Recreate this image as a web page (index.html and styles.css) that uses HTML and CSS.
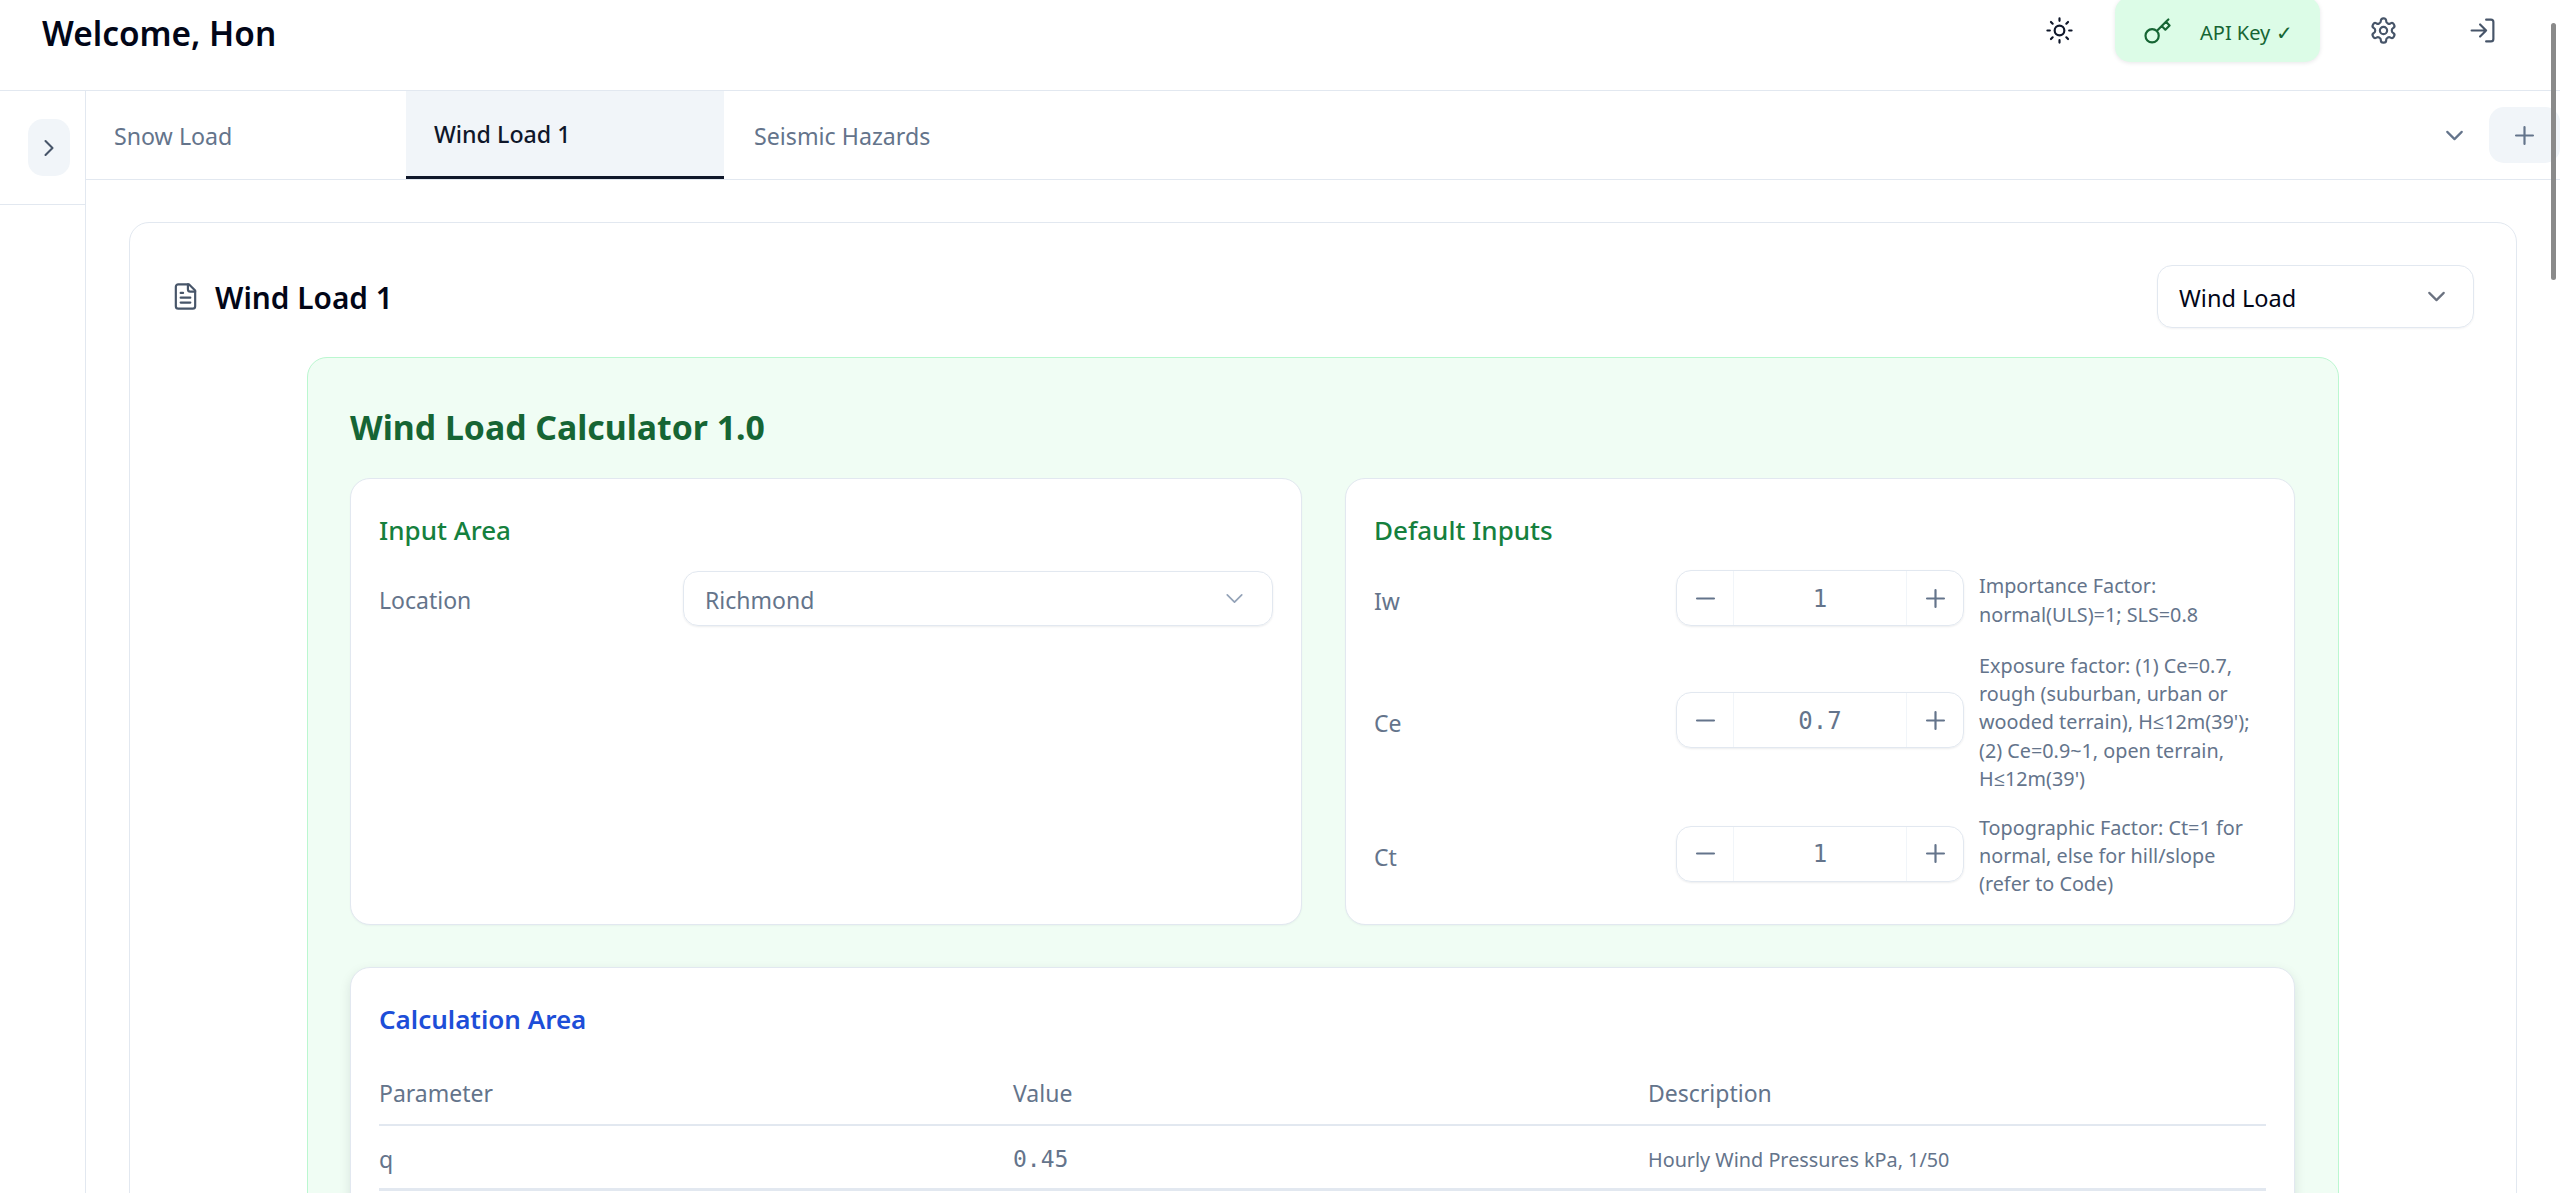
FILE: index.html
```html
<!DOCTYPE html>
<html lang="en">
<head>
<meta charset="utf-8">
<title>Wind Load 1</title>
<link rel="stylesheet" href="styles.css">
</head>
<body>
<div class="app">
  <header class="topbar">
    <h1 class="welcome">Welcome, Hon</h1>
    <div class="top-actions">
      <button class="top-icon sun"><svg class="ico" viewBox="0 0 24 24"><circle cx="12" cy="12" r="4"/><path d="M12 2v2M12 20v2M4.93 4.93l1.41 1.41M17.66 17.66l1.41 1.41M2 12h2M20 12h2M6.34 17.66l-1.41 1.41M19.07 4.93l-1.41 1.41"/></svg></button>
      <button class="api-key"><svg class="ico" viewBox="0 0 24 24"><path d="m21 2-2 2m-7.61 7.61a5.5 5.5 0 1 1-7.778 7.778 5.5 5.5 0 0 1 7.777-7.777zm0 0L15.5 7.5m0 0 3 3L22 7l-3-3m-3.5 3.5L19 4"/></svg><span>API Key ✓</span></button>
      <button class="top-icon gear"><svg class="ico" viewBox="0 0 24 24"><path d="M12.22 2h-.44a2 2 0 0 0-2 2v.18a2 2 0 0 1-1 1.73l-.43.25a2 2 0 0 1-2 0l-.15-.08a2 2 0 0 0-2.73.73l-.22.38a2 2 0 0 0 .73 2.73l.15.1a2 2 0 0 1 1 1.72v.51a2 2 0 0 1-1 1.74l-.15.09a2 2 0 0 0-.73 2.73l.22.38a2 2 0 0 0 2.73.73l.15-.08a2 2 0 0 1 2 0l.43.25a2 2 0 0 1 1 1.73V20a2 2 0 0 0 2 2h.44a2 2 0 0 0 2-2v-.18a2 2 0 0 1 1-1.73l.43-.25a2 2 0 0 1 2 0l.15.08a2 2 0 0 0 2.73-.73l.22-.39a2 2 0 0 0-.73-2.73l-.15-.08a2 2 0 0 1-1-1.74v-.5a2 2 0 0 1 1-1.74l.15-.09a2 2 0 0 0 .73-2.73l-.22-.38a2 2 0 0 0-2.73-.73l-.15.08a2 2 0 0 1-2 0l-.43-.25a2 2 0 0 1-1-1.73V4a2 2 0 0 0-2-2z"/><circle cx="12" cy="12" r="3"/></svg></button>
      <button class="top-icon exit"><svg class="ico" viewBox="0 0 24 24"><path d="M15 3h4a2 2 0 0 1 2 2v14a2 2 0 0 1-2 2h-4M10 17l5-5-5-5M15 12H3"/></svg></button>
    </div>
  </header>
  <div class="workspace">
    <aside class="sidebar">
      <div class="side-head">
        <button class="side-toggle"><svg class="ico" viewBox="0 0 24 24"><path d="m9 18 6-6-6-6"/></svg></button>
      </div>
    </aside>
    <main class="main">
      <nav class="tabbar">
        <a class="tab">Snow Load</a>
        <a class="tab active">Wind Load 1</a>
        <a class="tab">Seismic Hazards</a>
        <span class="tab-spacer"></span>
        <button class="tab-menu"><svg class="ico" viewBox="0 0 24 24"><path d="m6 9 6 6 6-6"/></svg></button>
        <button class="tab-add"><svg class="ico" viewBox="0 0 24 24"><path d="M5 12h14M12 5v14"/></svg></button>
      </nav>
      <div class="content">
        <section class="sheet">
          <div class="sheet-head">
            <div class="sheet-title">
              <svg class="ico doc" viewBox="0 0 24 24"><path d="M15 2H6a2 2 0 0 0-2 2v16a2 2 0 0 0 2 2h12a2 2 0 0 0 2-2V7Z"/><path d="M14 2v4a2 2 0 0 0 2 2h4M10 9H8M16 13H8M16 17H8"/></svg>
              <h2>Wind Load 1</h2>
            </div>
            <div class="type-select"><span>Wind Load</span><svg class="ico" viewBox="0 0 24 24"><path d="m6 9 6 6 6-6"/></svg></div>
          </div>
          <div class="panel">
            <h3 class="panel-title">Wind Load Calculator 1.0</h3>
            <div class="two-col">
              <div class="box">
                <h4 class="box-title green">Input Area</h4>
                <div class="input-row">
                  <span class="field-label">Location</span>
                  <div class="loc-select"><span>Richmond</span><svg class="ico" viewBox="0 0 24 24"><path d="m6 9 6 6 6-6"/></svg></div>
                </div>
              </div>
              <div class="box">
                <h4 class="box-title green">Default Inputs</h4>
                <div class="defaults">
                  <div class="def-row">
                    <span class="field-label">Iw</span>
                    <div class="stepper"><button class="step"><svg class="ico" viewBox="0 0 24 24"><path d="M5 12h14"/></svg></button><span class="step-val">1</span><button class="step"><svg class="ico" viewBox="0 0 24 24"><path d="M5 12h14M12 5v14"/></svg></button></div>
                    <p class="hint">Importance Factor: normal(ULS)=1; SLS=0.8</p>
                  </div>
                  <div class="def-row">
                    <span class="field-label">Ce</span>
                    <div class="stepper"><button class="step"><svg class="ico" viewBox="0 0 24 24"><path d="M5 12h14"/></svg></button><span class="step-val">0.7</span><button class="step"><svg class="ico" viewBox="0 0 24 24"><path d="M5 12h14M12 5v14"/></svg></button></div>
                    <p class="hint">Exposure factor: (1) Ce=0.7, rough (suburban, urban or wooded terrain), H≤12m(39'); (2) Ce=0.9~1, open terrain, H≤12m(39')</p>
                  </div>
                  <div class="def-row">
                    <span class="field-label">Ct</span>
                    <div class="stepper"><button class="step"><svg class="ico" viewBox="0 0 24 24"><path d="M5 12h14"/></svg></button><span class="step-val">1</span><button class="step"><svg class="ico" viewBox="0 0 24 24"><path d="M5 12h14M12 5v14"/></svg></button></div>
                    <p class="hint">Topographic Factor: Ct=1 for normal, else for hill/slope (refer to Code)</p>
                  </div>
                </div>
              </div>
            </div>
            <div class="box calc">
              <h4 class="box-title blue">Calculation Area</h4>
              <div class="calc-table">
                <div class="calc-row calc-head"><span>Parameter</span><span>Value</span><span>Description</span></div>
                <div class="calc-row calc-item"><span class="param">q</span><span class="num">0.45</span><span class="desc">Hourly Wind Pressures kPa, 1/50</span></div>
              </div>
            </div>
          </div>
        </section>
      </div>
    </main>
  </div>
  <div class="scroll-thumb"></div>
</div>
</body>
</html>
```

FILE: styles.css
```css
* { box-sizing: border-box; }
html, body { margin: 0; height: 100%; overflow: hidden; background: #fff; }
body { font-family: "Noto Sans", "Open Sans", sans-serif; color: #0f172a; font-size: 20px; }
h1, h2, h3, h4, p { margin: 0; }
button { font: inherit; border: 0; background: none; padding: 0; color: inherit; display: flex; align-items: center; justify-content: center; }
.ico { width: 29px; height: 29px; fill: none; stroke: currentColor; stroke-width: 1.8; stroke-linecap: round; stroke-linejoin: round; flex: none; }

.app { position: relative; height: 100vh; display: flex; flex-direction: column; overflow: hidden; }
.scroll-thumb { position: absolute; right: 4px; top: 23px; width: 5px; height: 257px; border-radius: 3px; background: #8a8a8a; }

.topbar { height: 91px; flex: none; border-bottom: 1px solid #e2e8f0; display: flex; justify-content: space-between; align-items: flex-start; padding: 0 47px 0 42px; }
.welcome { font-size: 33.4px; font-weight: 600; line-height: 66px; color: #020617; }
.top-actions { display: flex; align-items: flex-start; margin-top: -3px; }
.top-icon { width: 62px; height: 66px; }
.sun { color: #0f172a; margin-right: 25px; }
.gear { color: #475569; margin-left: 32px; }
.exit { color: #475569; margin-left: 37px; }
.api-key { height: 65px; width: 205px; padding: 3px 0 0 28px; justify-content: flex-start; gap: 28px; background: #dcfce7; color: #166534; border-radius: 15px; box-shadow: 0 1px 4px rgba(15, 23, 42, .1); }
.api-key span { font-size: 20px; line-height: 24px; padding-top: 3px; }

.workspace { flex: 1; display: flex; min-height: 0; }
.sidebar { width: 86px; flex: none; border-right: 1px solid #e2e8f0; }
.side-head { height: 114px; border-bottom: 1px solid #e2e8f0; padding: 28px 0 0 28px; }
.side-toggle { width: 42px; height: 57px; border-radius: 15px; background: #f1f5f9; color: #475569; }
.side-toggle .ico { width: 28px; height: 28px; }

.main { flex: 1; min-width: 0; display: flex; flex-direction: column; }
.tabbar { height: 89px; flex: none; border-bottom: 1px solid #e2e8f0; display: flex; align-items: stretch; }
.tab { width: 318px; padding: 0 28px; font-size: 23.2px; line-height: 90px; color: #64748b; }
.tab:first-child { width: 320px; }
.tab:nth-child(3) { padding-left: 30px; }
.tab.active { background: #f1f5f9; color: #0f172a; font-weight: 500; border-bottom: 3px solid #0f172a; line-height: 87px; }
.tab-spacer { flex: 1; }
.tab-menu { width: 31px; margin-right: 19px; color: #64748b; }
.tab-add { width: 71px; height: 56px; margin-top: 16px; border-radius: 15px; background: #f1f5f9; color: #64748b; }

.content { flex: 1; padding: 42px 43px 0 43px; min-height: 0; }
.sheet { border: 1px solid #e2e8f0; border-radius: 20px; padding: 42px 42px 40px 45px; background: #fff; }
.sheet-head { display: flex; justify-content: space-between; align-items: center; height: 63px; }
.sheet-title { display: flex; align-items: center; gap: 15px; }
.sheet-title h2 { font-size: 29.8px; font-weight: 600; color: #020617; padding-top: 2px; }
.doc { color: #475569; margin-left: -4px; }
.type-select { width: 317px; height: 63px; border: 1px solid #e2e8f0; border-radius: 15px; display: flex; align-items: center; justify-content: space-between; padding: 0 22px 0 21px; box-shadow: 0 1px 2px rgba(15, 23, 42, .05); font-size: 23.5px; color: #020617; }
.type-select span { padding-top: 2px; }
.type-select .ico { color: #6b7280; }

.panel { width: 2032px; margin: 29px 0 0 132px; border: 1px solid #bbf7d0; border-radius: 20px; background: #f0fdf4; padding: 42px 43px 40px 42px; }
.panel-title { font-size: 33.8px; font-weight: 700; line-height: 54px; color: #166534; }
.two-col { display: grid; grid-template-columns: 952px 950px; justify-content: space-between; margin-top: 24px; }
.box { background: #fff; border: 1px solid #e2e8f0; border-radius: 20px; padding: 30px 28px 30px 28px; height: 447px; box-shadow: 0 1px 2px rgba(15, 23, 42, .04); }
.box-title { font-size: 26px; font-weight: 500; line-height: 42px; }
.green { color: #15803d; }
.blue { color: #1d4ed8; font-weight: 600; }
.input-row { display: flex; align-items: center; justify-content: space-between; margin-top: 20px; }
.field-label { font-size: 23px; color: #64748b; padding-top: 3px; }
.def-row .field-label { padding-top: 1px; }
.loc-select { width: 590px; height: 55px; border: 1px solid #e2e8f0; border-radius: 15px; display: flex; align-items: center; justify-content: space-between; padding: 0 23px 0 21px; font-size: 23px; color: #64748b; box-shadow: 0 1px 2px rgba(15, 23, 42, .08); }
.loc-select span { padding-top: 2px; }
.loc-select .ico { color: #94a3b8; stroke-width: 1.4; }

.defaults { display: flex; flex-direction: column; gap: 21px; margin-top: 19px; }
.def-row { display: grid; grid-template-columns: 302px 288px 1fr; align-items: center; }
.stepper { height: 56px; margin-bottom: 5px; border: 1px solid #e2e8f0; border-radius: 15px; display: grid; grid-template-columns: 56px 1fr 56px; box-shadow: 0 1px 2px rgba(15, 23, 42, .08); color: #64748b; }
.step-val { font-family: "DejaVu Sans Mono", monospace; font-size: 24px; display: flex; align-items: center; justify-content: center; border-left: 1px solid #f1f5f9; border-right: 1px solid #f1f5f9; padding-top: 1px; }
.hint { font-size: 19.8px; line-height: 28.2px; color: #64748b; margin-left: 15px; }

.calc { margin-top: 42px; height: auto; padding-top: 30px; box-shadow: 0 4px 12px rgba(15, 23, 42, .1); }
.calc-table { margin-top: 30px; }
.calc-row { display: grid; grid-template-columns: 634px 635px 1fr; align-items: center; }
.calc-head { height: 56px; padding-bottom: 8px; border-bottom: 2px solid #e2e8f0; font-size: 23px; color: #64748b; }
.calc-item { height: 65px; padding-top: 4px; border-bottom: 3px solid #e2e8f0; color: #64748b; }
.param { font-size: 23px; }
.num { font-family: "DejaVu Sans Mono", monospace; font-size: 23px; }
.desc { font-size: 19.8px; }
```
